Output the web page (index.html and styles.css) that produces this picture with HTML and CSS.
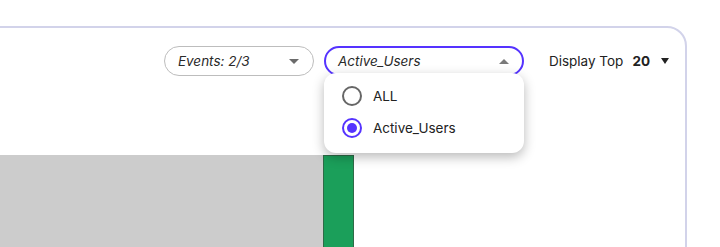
FILE: index.html
```html
<!DOCTYPE html>
<html lang="en">
<head>
    <meta charset="UTF-8">
    <title>Events chart</title>
    <link rel="stylesheet" href="styles.css">
</head>
<body>
    <div class="card">
        <div class="toolbar">
            <div class="select">
                <span class="select-text">Events: 2/3</span>
                <span class="caret-down"></span>
            </div>
            <div class="select-wrap">
                <div class="select active">
                    <span class="select-text">Active_Users</span>
                    <span class="caret-up"></span>
                </div>
                <div class="menu">
                    <div class="option">
                        <span class="radio"></span>
                        <span>ALL</span>
                    </div>
                    <div class="option">
                        <span class="radio checked"></span>
                        <span>Active_Users</span>
                    </div>
                </div>
            </div>
            <div class="display-top">
                <span>Display Top</span>
                <span class="top-value">20</span>
                <span class="top-caret"></span>
            </div>
        </div>
        <div class="chart">
            <div class="bar-gray"></div>
            <div class="bar-green"></div>
        </div>
    </div>
</body>
</html>
```
FILE: styles.css
```css
body {
    margin: 0;
    padding: 0;
    background-color: white;
    font-family: Inter, "Noto Sans", sans-serif;
    color: #222;
    overflow: hidden;
}
.card {
    box-sizing: border-box;
    width: 727px;
    height: 300px;
    margin-left: -40px;
    margin-top: 26px;
    border: 2px solid #d2d3ea;
    border-radius: 20px;
    background-color: white;
}
.toolbar {
    display: flex;
    justify-content: flex-end;
    align-items: center;
    padding: 18px 16px 0 0;
}
.select {
    box-sizing: border-box;
    width: 150px;
    height: 30px;
    border: 1px solid #bdbdbd;
    border-radius: 15px;
    display: flex;
    align-items: center;
    justify-content: space-between;
    padding: 0 14px 0 13px;
}
.select-text {
    font-style: italic;
    font-size: 13.5px;
    color: #2a2a2a;
}
.caret-down {
    width: 0;
    height: 0;
    border-left: 5px solid transparent;
    border-right: 5px solid transparent;
    border-top: 5px solid #6b6b6b;
}
.select-wrap {
    position: relative;
    margin-left: 10px;
}
.select.active {
    width: 200px;
    border: 2px solid #5533ff;
    padding: 0 13px 0 12px;
}
.caret-up {
    width: 0;
    height: 0;
    border-left: 5px solid transparent;
    border-right: 5px solid transparent;
    border-bottom: 5px solid #7a7a7a;
}
.menu {
    position: absolute;
    top: 27px;
    left: 0;
    width: 200px;
    box-sizing: border-box;
    padding: 7px 0 9px 18px;
    background-color: white;
    border-radius: 12px;
    box-shadow: 0 4px 12px rgba(0, 0, 0, 0.28);
    z-index: 10;
}
.option {
    display: flex;
    align-items: center;
    height: 32px;
    font-size: 13.5px;
    color: #222;
}
.radio {
    box-sizing: border-box;
    width: 20px;
    height: 20px;
    border: 2px solid #666;
    border-radius: 50%;
    margin-right: 11px;
    display: flex;
    align-items: center;
    justify-content: center;
}
.radio.checked {
    border-color: #5533ff;
}
.radio.checked::after {
    content: "";
    width: 10px;
    height: 10px;
    border-radius: 50%;
    background-color: #5533ff;
}
.display-top {
    display: flex;
    align-items: center;
    margin-left: 25px;
    font-size: 13.5px;
    color: #222;
}
.top-value {
    font-weight: bold;
    margin-left: 9px;
}
.top-caret {
    width: 0;
    height: 0;
    margin-left: 11px;
    border-left: 4px solid transparent;
    border-right: 4px solid transparent;
    border-top: 6px solid #222;
}
.chart {
    display: flex;
    margin-top: 79px;
    height: 120px;
}
.bar-gray {
    width: 361px;
    background-color: #cccccc;
}
.bar-green {
    box-sizing: border-box;
    width: 31px;
    background-color: #1b9f5a;
    border: 1px solid #2f6b48;
}
```
